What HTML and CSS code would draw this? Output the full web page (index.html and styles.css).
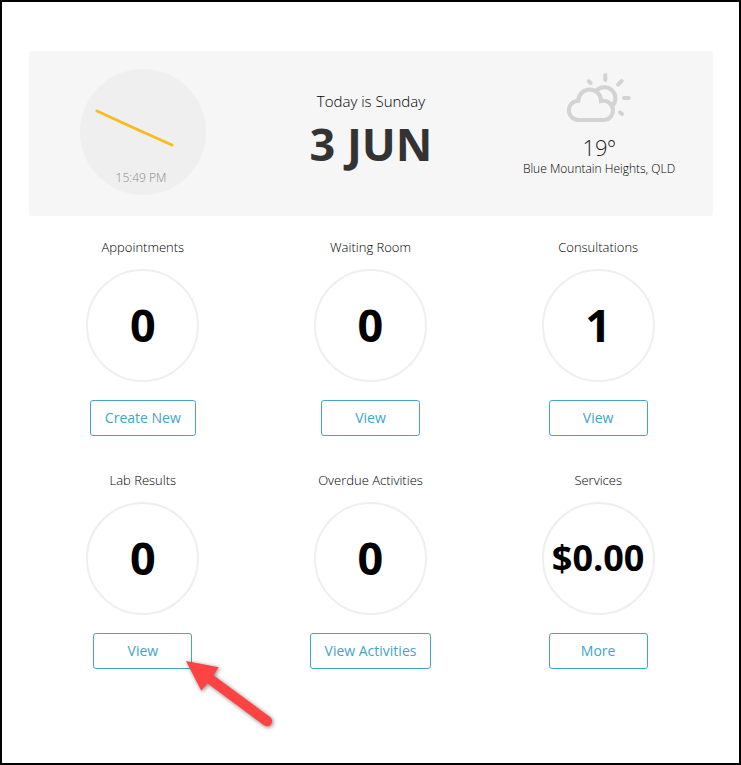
FILE: index.html
```html
<!DOCTYPE html>
<html lang="en">
<head>
  <meta charset="UTF-8">
  <meta name="viewport" content="width=device-width, initial-scale=1.0">
  <title>Dashboard</title>
  <link rel="stylesheet" href="styles.css">
</head>
<body>

  <main class="dashboard">
    <header class="summary">
      <div class="clock">
        <svg class="clock-hands" viewBox="0 0 126 100" aria-hidden="true">
          <path d="M17 42 L54 59 L92 76"/>
        </svg>
        <time class="clock-time">15:49 PM</time>
      </div>

      <div class="today">
        <div class="today-label">Today is Sunday</div>
        <h1 class="today-date">3 JUN</h1>
      </div>

      <div class="weather">
        <svg class="weather-icon" viewBox="20 24 192 147" aria-hidden="true">
          <path d="M107 78 A33 33 0 1 1 157 122"/>
          <path d="M55 165 A29 29 0 0 1 54 107 A34 34 0 0 1 122 108 A29 29 0 1 1 132 165 Z"/>
          <path d="M135 30 V45 M173 59 L184 48 M191 99 H205 M179 142 L185 147 M85 49 L91 54"/>
        </svg>
        <div class="weather-temp">19º</div>
        <div class="weather-place">Blue Mountain Heights, QLD</div>
      </div>
    </header>

    <div class="tiles">
      <section class="tile">
        <h2 class="tile-title">Appointments</h2>
        <div class="tile-count">0</div>
        <button type="button" class="btn">Create New</button>
      </section>

      <section class="tile">
        <h2 class="tile-title">Waiting Room</h2>
        <div class="tile-count">0</div>
        <button type="button" class="btn">View</button>
      </section>

      <section class="tile">
        <h2 class="tile-title">Consultations</h2>
        <div class="tile-count">1</div>
        <button type="button" class="btn">View</button>
      </section>

      <section class="tile">
        <h2 class="tile-title">Lab Results</h2>
        <div class="tile-count">0</div>
        <div class="pointed">
          <button type="button" class="btn">View</button>
          <svg class="arrow" viewBox="378 183 258 198" aria-hidden="true">
            <path d="M378 183 L476 202 L460 226 L630 351 A15 15 0 0 1 612 376 L442 250 L424 272 Z"/>
          </svg>
        </div>
      </section>

      <section class="tile">
        <h2 class="tile-title">Overdue Activities</h2>
        <div class="tile-count">0</div>
        <button type="button" class="btn">View Activities</button>
      </section>

      <section class="tile">
        <h2 class="tile-title">Services</h2>
        <div class="tile-count tile-money">$0.00</div>
        <button type="button" class="btn">More</button>
      </section>
    </div>
  </main>

</body>
</html>
```
FILE: styles.css
```css
* {
  box-sizing: border-box;
}

body {
  margin: 0;
  background: #fff;
  color: #000;
  font-family: "Open Sans", "Noto Sans", sans-serif;
  font-size: 13px;
  font-weight: 300;
}

h1,
h2 {
  margin: 0;
}

.dashboard {
  min-height: 100vh;
  padding: 49px 26px 49px 27px;
  border: 2px solid #000;
}

.summary {
  display: grid;
  grid-template-columns: repeat(3, 1fr);
  justify-items: center;
  align-items: start;
  padding: 18px 0 21px;
  background: #f6f6f6;
  border-radius: 3px;
  text-align: center;
}

/* clock */
.clock {
  display: flex;
  flex-direction: column;
  width: 126px;
  height: 126px;
  background: #efefef;
  border-radius: 50%;
}

.clock-hands {
  width: 126px;
  height: 100px;
  fill: none;
  stroke: #f6bd1b;
  stroke-width: 3;
  stroke-linecap: round;
}

.clock-time {
  padding-right: 4px;
  color: #888;
  font-size: 12px;
  line-height: 18px;
}

/* date */
.today {
  padding-top: 22px;
}

.today-label {
  font-size: 15px;
  line-height: 20px;
}

.today-date {
  color: #333;
  font-size: 45px;
  font-weight: 700;
  line-height: 66px;
}

/* weather */
.weather {
  padding-top: 4px;
}

.weather-icon {
  display: block;
  width: 64px;
  height: 49px;
  margin: 0 auto 11px;
  fill: none;
  stroke: #d3d3d3;
  stroke-width: 12;
  stroke-linecap: round;
}

.weather-temp {
  color: #222;
  font-size: 22px;
  line-height: 28px;
}

.weather-place {
  font-size: 12px;
  line-height: 16px;
}

/* tiles */
.tiles {
  display: grid;
  grid-template-columns: repeat(3, 1fr);
  row-gap: 35px;
  padding: 22px 1px 0 0;
}

.tile {
  display: flex;
  flex-direction: column;
  align-items: center;
}

.tile-title {
  font-size: 13px;
  font-weight: 300;
  line-height: 18px;
}

.tile-count {
  display: flex;
  align-items: center;
  justify-content: center;
  width: 113px;
  height: 113px;
  margin: 13px 0 18px;
  padding-bottom: 2px;
  border: 2px solid #efefef;
  border-radius: 50%;
  color: #000;
  font-size: 45px;
  font-weight: 700;
}

.tile-money {
  font-size: 36px;
}

.btn {
  min-width: 99px;
  height: 36px;
  padding: 0 14px 2px;
  background: #fff;
  border: 1px solid #42a5c6;
  border-radius: 3px;
  color: #42a5c6;
  font-family: inherit;
  font-size: 14px;
  font-weight: 400;
  cursor: pointer;
}

.btn:hover {
  background: #42a5c6;
  color: #fff;
}

/* callout arrow on the lab results button */
.pointed {
  position: relative;
}

.arrow {
  position: absolute;
  top: calc(100% - 8px);
  left: calc(100% - 6px);
  width: 86px;
  height: 66px;
  overflow: visible;
  fill: #ff4343;
  filter: drop-shadow(1px 1px 2px rgba(0, 0, 0, 0.5));
  pointer-events: none;
}
```
